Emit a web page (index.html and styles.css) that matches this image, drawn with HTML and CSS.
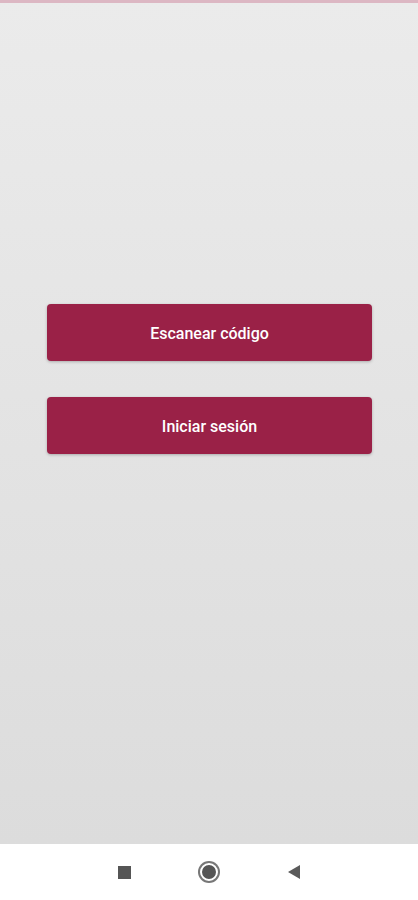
FILE: index.html
```html
<!DOCTYPE html>
<html lang="es">
<head>
    <meta charset="UTF-8">
    <meta name="viewport" content="width=device-width, initial-scale=1.0">
    <title>Inicio</title>
    <link rel="stylesheet" href="styles.css">
</head>
<body>

    <div class="app">
        <div class="top-line"></div>

        <main class="content">
            <button class="main-btn">Escanear código</button>
            <button class="main-btn">Iniciar sesión</button>
        </main>
    </div>

    <nav class="nav-bar">
        <span class="nav-square"></span>
        <span class="nav-circle"></span>
        <svg class="nav-back" width="14" height="14" viewBox="0 0 14 14">
            <polygon points="13,0 13,14 1,7" fill="#5a5a5a"/>
        </svg>
    </nav>

</body>
</html>
```

FILE: styles.css
```css
html, body {
    margin: 0;
    padding: 0;
}

body {
    font-family: 'Roboto', 'Liberation Sans', sans-serif;
    width: 418px;
    height: 900px;
    overflow: hidden;
    display: flex;
    flex-direction: column;
}

.app {
    height: 844px;
    background: linear-gradient(#ebebeb, #dcdcdc);
    display: flex;
    flex-direction: column;
}

.top-line {
    height: 3px;
    background-color: #dcb7c3;
}

.content {
    display: flex;
    flex-direction: column;
    gap: 36px;
    padding: 301px 46px 0 47px;
}

.main-btn {
    height: 57px;
    padding-top: 3px;
    border: none;
    border-radius: 4px;
    background-color: #9a2147;
    color: #fff;
    font-family: 'Roboto', 'Liberation Sans', sans-serif;
    font-size: 16px;
    font-weight: 500;
    box-shadow: 0 1px 3px rgba(0, 0, 0, 0.25);
}

.nav-bar {
    height: 56px;
    background-color: #fff;
    display: flex;
    align-items: center;
    justify-content: center;
    gap: 69px;
}

.nav-square {
    width: 13px;
    height: 13px;
    background-color: #555;
}

.nav-circle {
    width: 14px;
    height: 14px;
    border-radius: 50%;
    background-color: #555;
    border: 2px solid #fff;
    box-shadow: 0 0 0 2px #777;
}
```
